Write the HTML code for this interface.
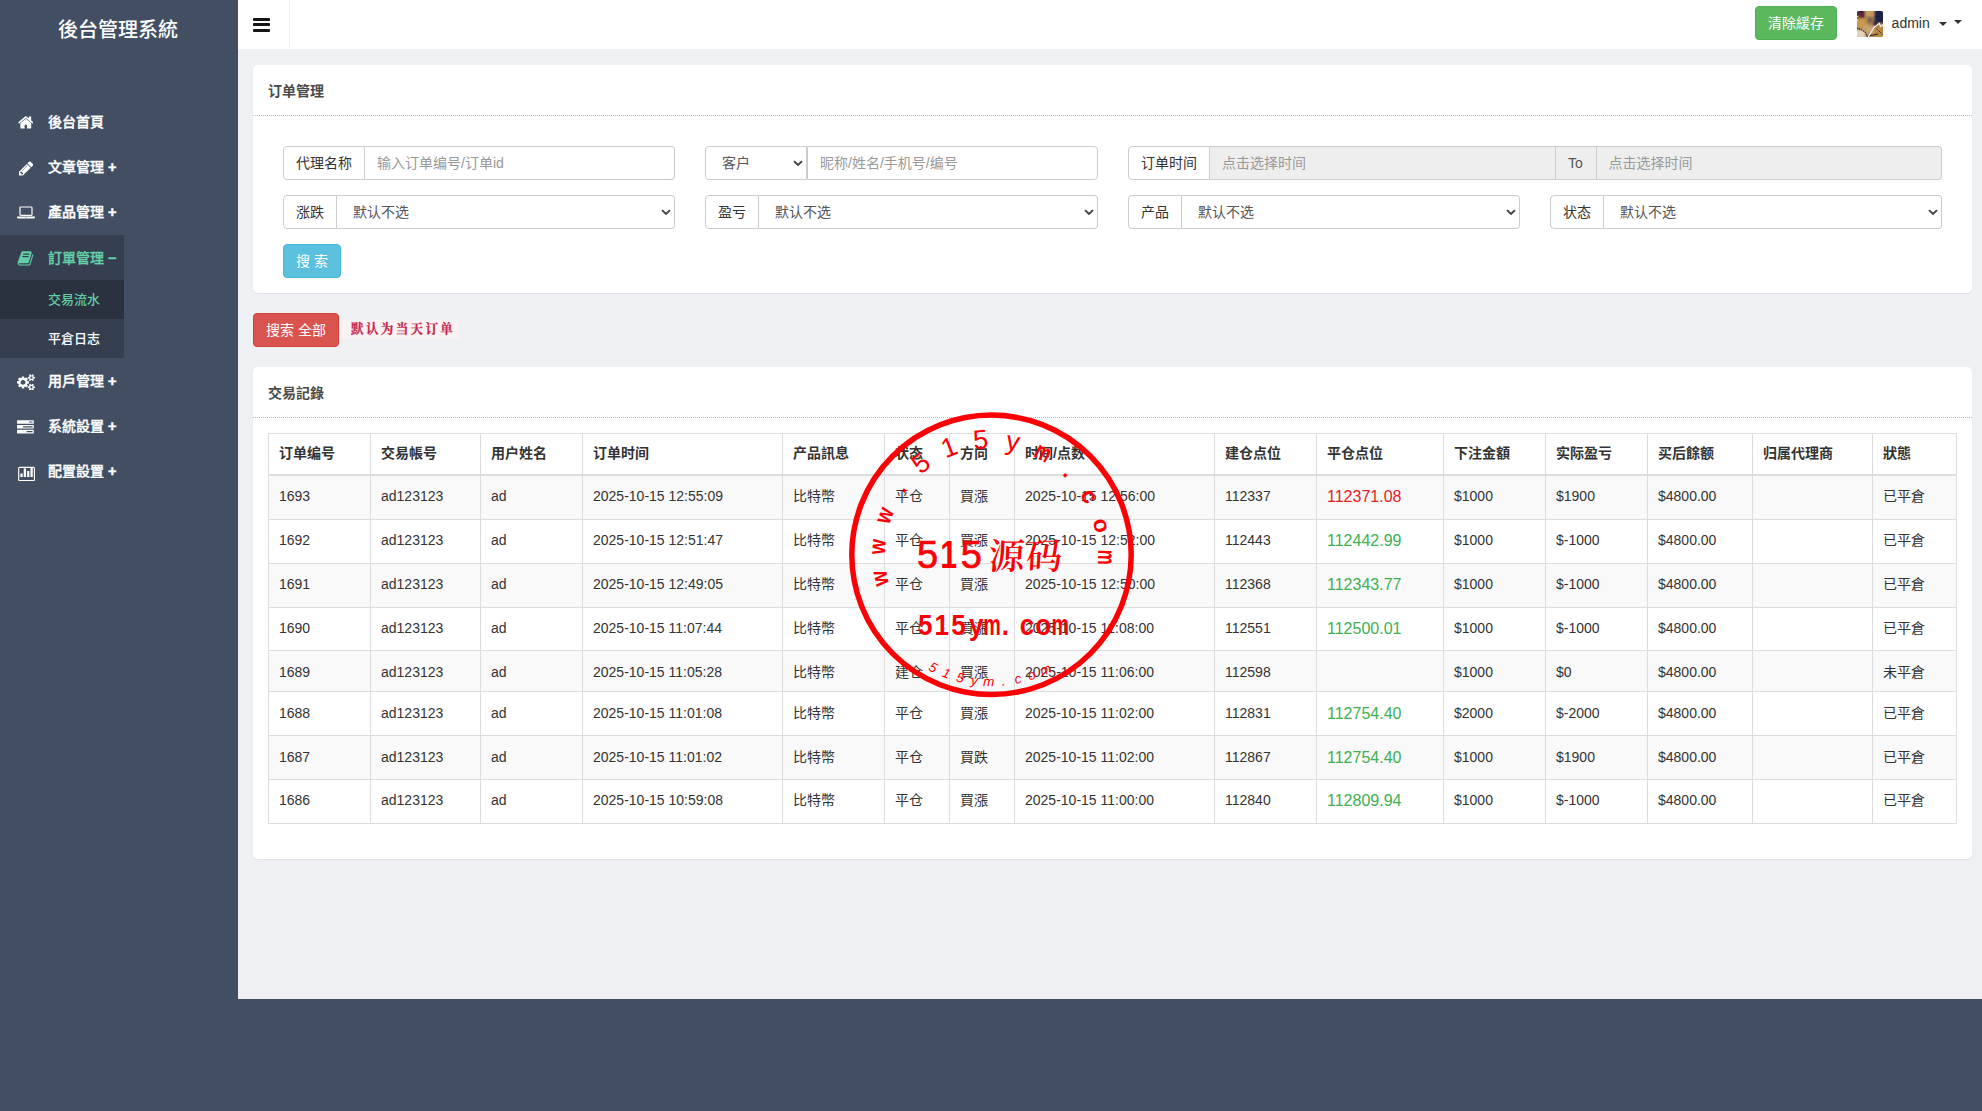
<!DOCTYPE html>
<html lang="zh">
<head>
<meta charset="utf-8">
<title>後台管理系統</title>
<style>
*{box-sizing:border-box;}
html,body{margin:0;padding:0;}
body{width:1982px;height:1111px;overflow:hidden;background:#424f63;font-family:"Liberation Sans","Noto Sans CJK SC",sans-serif;font-size:14px;line-height:1.42857;color:#333;position:relative;}
a{text-decoration:none;color:inherit;}
/* sidebar */
.side{position:absolute;left:0;top:0;width:238px;height:1111px;background:#424f63;}
.logo{position:absolute;left:-1px;top:1.5px;width:238px;height:56px;text-align:center;color:#fff;font-size:20px;line-height:56px;font-weight:500;}
.nav{position:absolute;left:0;top:100px;width:124px;margin:0;padding:0;list-style:none;}
.nav li{display:block;position:relative;}
.nav li a{display:block;height:45px;line-height:45px;padding-left:48px;color:#fff;font-size:14px;font-weight:500;-webkit-text-stroke:.3px currentColor;white-space:nowrap;}
.nav li svg{position:absolute;left:17.6px;fill:#fff;}
.nav li a b{font-weight:700;-webkit-text-stroke:.45px currentColor;font-size:14.5px;}
.nav li.act{background:#353f4f;}
.nav li.act>a{line-height:46.4px;}
.nav li.act>a{color:#65cea7;}
.nav li.act svg{fill:#65cea7;}
.sub{margin:0;padding:0;list-style:none;background:#353f4f;}
.sub li a{height:39px;line-height:39px;font-weight:500;font-size:13px;-webkit-text-stroke:0;}
.sub li.on{background:#2a323f;}
.sub li.on a{color:#65cea7;}
.sub li+li a{line-height:40.5px;}
.nav li.act+li{margin-top:1.2px;}
/* main */
.main{position:absolute;left:238px;top:0;width:1744px;height:998.7px;background:#eff0f4;}
.head{position:absolute;left:0;top:0;width:1744px;height:49px;background:#fff;}
.tog{position:absolute;left:0;top:0;width:52px;height:49px;border-right:1px solid #eff0f4;}
.tog i{position:absolute;left:14.8px;width:17.4px;height:2.9px;background:#161616;border-radius:.8px;}
.btn{display:inline-block;height:34px;line-height:32px;padding:0 12px;font-size:14px;color:#fff;border:1px solid transparent;border-radius:4px;text-align:center;white-space:nowrap;}
.b-g{position:absolute;left:1517px;top:6px;width:82px;background:#5cb85c;border-color:#4cae4c;}
.ava{position:absolute;left:1619px;top:11px;width:26px;height:26px;}
.adm{position:absolute;left:1653.600px;top:13px;font-size:14px;line-height:20px;color:#333;}
.car{position:absolute;width:0;height:0;border-left:4px solid transparent;border-right:4px solid transparent;border-top:4px solid #333;}
.panel{position:absolute;left:15px;width:1719px;background:#fff;border-radius:5px;box-shadow:0 1px 1px rgba(0,0,0,.06);}
.ph{height:51px;line-height:20px;padding:15.8px 15px 0;font-weight:700;color:#4a4a4a;border-bottom:1px dotted #bbb;font-size:14px;}
.ig{position:absolute;height:34px;display:flex;}
.ig>*{height:34px;border:1px solid #ccc;font-size:14px;line-height:20px;padding:5.5px 12px 0;color:#555;background:#fff;white-space:nowrap;}
.ig>*+*{border-left:0;}
.ig>*:first-child{border-radius:4px 0 0 4px;}
.ig>*:last-child{border-radius:0 4px 4px 0;}
.ad{color:#333 !important;text-align:center;flex:none;}
.in{flex:1;color:#999 !important;}
.ro{background:#eee !important;}
.se{flex:1;position:relative;padding-left:16px !important;}
.cv{position:absolute;right:2.3px;top:12px;width:12px;height:8px;border:0 !important;padding:0 !important;background:none !important;}
.b-i{position:absolute;left:30px;top:179px;width:58px;background:#5bc0de;border-color:#46b8da;}
.b-d{position:absolute;left:15px;top:313px;width:86px;background:#d9534f;border-color:#d43f3a;}
code{position:absolute;left:102px;top:320px;height:19px;line-height:20.8px;padding:0 4px 0 11px;font-family:"Liberation Mono","Noto Serif CJK SC",monospace;font-size:12.6px;font-weight:700;letter-spacing:2.3px;-webkit-text-stroke:.25px #c7254e;color:#c7254e;background:#f9f2f4;border-radius:4px;white-space:nowrap;}
table{position:absolute;left:15px;top:66px;width:1688px;border-collapse:collapse;table-layout:fixed;}
th,td{border:1px solid #ddd;padding:10.3px 10px 0;text-align:left;font-size:14px;line-height:20px;vertical-align:top;color:#333;white-space:nowrap;overflow:hidden;}
th{font-weight:700;border-bottom-width:2px;padding-top:9.3px;}
thead tr{height:41px;}
tbody tr{height:43.86px;}
tbody tr:first-child{height:44.86px;}
tbody tr:first-child td{padding-top:10.2px;}
tbody tr.s{height:41px;}
tbody tr:nth-child(odd) td{background:#f9f9f9;}
.g{color:#3eb052;font-size:16px;line-height:21.6px;}
.r{color:#e51c23;font-size:16px;line-height:21.6px;}
.stamp{position:absolute;left:840px;top:404px;width:302px;height:302px;}
</style>
</head>
<body>
<div class="side">
  <div class="logo">後台管理系統</div>
  <ul class="nav">
    <li><svg viewBox="0 0 1664 1792" style="top:13.9px;width:15.60px;height:16.8px"><path d="M1408 992v480q0 26-19 45t-45 19h-384v-384h-256v384h-384q-26 0-45-19t-19-45v-480q0-1 .5-3t.5-3l575-474 575 474q1 2 1 6zm223-69l-62 74q-8 9-21 11h-3q-13 0-21-7l-692-577-692 577q-12 8-24 7-13-2-21-11l-62-74q-8-10-7-23.500t11-21.500l719-599q32-26 76-26t76 26l244 204v-195q0-14 9-23t23-9h192q14 0 23 9t9 23v408l219 182q10 8 11 21.500t-7 23.500z"/></svg><a>後台首頁</a></li>
    <li><svg viewBox="0 0 1536 1792" style="top:14.7px;left:18.6px;width:14.40px;height:16.8px"><path d="M363 1536l91-91-235-235-91 91v107h128v128h107zm523-928q0-22-22-22-10 0-17 7l-542 542q-7 7-7 17 0 22 22 22 10 0 17-7l542-542q7-7 7-17zm-54-192l416 416-832 832h-416v-416zm683 96q0 53-37 90l-166 166-416-416 166-165q36-38 90-38 53 0 91 38l235 234q37 39 37 91z"/></svg><a>文章管理 <b>+</b></a></li>
    <li><svg viewBox="0 0 1920 1792" style="top:14.4px;left:17.2px;width:18.00px;height:16.8px"><path d="M416 1280q-66 0-113-47t-47-113v-704q0-66 47-113t113-47h1088q66 0 113 47t47 113v704q0 66-47 113t-113 47h-1088zm-32-864v704q0 13 9.500 22.500t22.500 9.500h1088q13 0 22.500-9.500t9.500-22.500v-704q0-13-9.500-22.500t-22.500-9.500h-1088q-13 0-22.500 9.500t-9.500 22.500zm1376 928h160v96q0 40-47 68t-113 28h-1600q-66 0-113-28t-47-68v-96h1760zm-720 96q16 0 16-16t-16-16h-160q-16 0-16 16t16 16h160z"/></svg><a>產品管理 <b>+</b></a></li>
    <li class="act"><svg viewBox="0 0 1792 1792" style="top:14.7px;left:17.1px;width:16.80px;height:16.8px"><path d="M1703 478q40 57 18 129l-275 906q-19 64-76.500 107.500t-122.500 43.500h-923q-77 0-148.500-53.500t-99.500-131.500q-24-67-2-127 0-4 3-27t4-37q1-8-3-21.500t-3-19.500q2-11 8-21t16.500-23.500 16.500-23.500q23-38 45-91.500t30-91.500q3-10 .5-30t-.5-28q3-11 17-28t17-23q21-36 42-92t25-90q1-9-2.500-32t.5-28q4-13 22-30.500t22-22.500q19-26 42.500-84.500t27.500-96.500q1-8-3-25.500t-2-26.500q2-8 9-18t18-23 17-21q8-12 16.500-30.500t15-35 16-36 19.500-32 26.500-23.500 36-11.500 47.500 5.500l-1 3q38-9 51-9h761q74 0 114 56t18 130l-274 906q-36 119-71.500 153.500t-128.500 34.500h-869q-27 0-38 15-11 16-1 43 24 70 144 70h923q29 0 56-15.500t35-41.500l300-987q7-22 5-57 38 15 59 43zm-1064 2q-4 13 2 22.500t20 9.500h608q13 0 25.500-9.500t16.500-22.500l21-64q4-13-2-22.500t-20-9.500h-608q-13 0-25.500 9.500t-16.500 22.500zm-83 256q-4 13 2 22.500t20 9.500h608q13 0 25.500-9.500t16.500-22.500l21-64q4-13-2-22.500t-20-9.500h-608q-13 0-25.500 9.500t-16.500 22.500z"/></svg><a>訂單管理 <b>−</b></a>
      <ul class="sub">
        <li class="on"><a>交易流水</a></li>
        <li><a>平倉日志</a></li>
      </ul>
    </li>
    <li><svg viewBox="0 0 1920 1792" style="top:14.5px;left:17.2px;width:18.00px;height:16.8px"><path d="M896 896q0-106-75-181t-181-75-181 75-75 181 75 181 181 75 181-75 75-181zm768 512q0-52-38-90t-90-38-90 38-38 90q0 53 37.500 90.500t90.500 37.500 90.500-37.500 37.500-90.500zm0-1024q0-52-38-90t-90-38-90 38-38 90q0 53 37.500 90.500t90.500 37.500 90.500-37.500 37.500-90.500zm-384 421v185q0 10-7 19.500t-16 10.500l-155 24q-11 35-32 76 34 48 90 115 7 11 7 20 0 12-7 19-23 30-82.500 89.500t-78.500 59.500q-11 0-21-7l-115-90q-37 19-77 31-11 108-23 155-7 24-30 24h-186q-11 0-20-7.500t-10-17.500l-23-153q-34-10-75-31l-118 89q-7 7-20 7-11 0-21-8-144-133-144-160 0-9 7-19 10-14 41-53t47-61q-23-44-35-82l-152-24q-10-1-17-9.500t-7-19.500v-185q0-10 7-19.500t16-10.500l155-24q11-35 32-76-34-48-90-115-7-11-7-20 0-12 7-20 22-30 82-89t79-59q11 0 21 7l115 90q34-18 77-32 11-108 23-154 7-24 30-24h186q11 0 20 7.500t10 17.500l23 153q34 10 75 31l118-89q8-7 20-7 11 0 21 8 144 133 144 160 0 8-7 19-12 16-42 54t-45 60q23 48 34 82l152 23q10 2 17 10.500t7 19.500zm640 533v140q0 16-149 31-12 27-30 52 51 113 51 138 0 4-4 7-122 71-124 71-8 0-46-47t-52-68q-20 2-30 2t-30-2q-14 21-52 68t-46 47q-2 0-124-71-4-3-4-7 0-25 51-138-18-25-30-52-149-15-149-31v-140q0-16 149-31 13-29 30-52-51-113-51-138 0-4 4-7 4-2 35-20t59-34 30-16q8 0 46 46.500t52 67.500q20-2 30-2t30 2q51-71 92-112l6-2q4 0 124 70 4 3 4 7 0 25-51 138 17 23 30 52 149 15 149 31zm0-1024v140q0 16-149 31-12 27-30 52 51 113 51 138 0 4-4 7-122 71-124 71-8 0-46-47t-52-68q-20 2-30 2t-30-2q-14 21-52 68t-46 47q-2 0-124-71-4-3-4-7 0-25 51-138-18-25-30-52-149-15-149-31v-140q0-16 149-31 13-29 30-52-51-113-51-138 0-4 4-7 4-2 35-20t59-34 30-16q8 0 46 46.500t52 67.500q20-2 30-2t30 2q51-71 92-112l6-2q4 0 124 70 4 3 4 7 0 25-51 138 17 23 30 52 149 15 149 31z"/></svg><a>用戶管理 <b>+</b></a></li>
    <li><svg viewBox="0 0 1792 1792" style="top:14.6px;left:17.2px;width:16.80px;height:16.8px"><path d="M1024 1408h640v-128h-640v128zm-384-512h1024v-128h-1024v128zm640-512h384v-128h-384v128zm512 832v256q0 26-19 45t-45 19h-1664q-26 0-45-19t-19-45v-256q0-26 19-45t45-19h1664q26 0 45 19t19 45zm0-512v256q0 26-19 45t-45 19h-1664q-26 0-45-19t-19-45v-256q0-26 19-45t45-19h1664q26 0 45 19t19 45zm0-512v256q0 26-19 45t-45 19h-1664q-26 0-45-19t-19-45v-256q0-26 19-45t45-19h1664q26 0 45 19t19 45z"/></svg><a>系統設置 <b>+</b></a></li>
    <li><svg viewBox="0 0 2048 1792" preserveAspectRatio="none" style="top:15.5px;left:16.8px;width:18px;height:16.8px"><path d="M640 896v384h-256v-384h256zm384-512v896h-256v-896h256zm384 256v640h-256v-640h256zm384-384v1024h-256v-1024h256zm128 1312v-1216q0-13-9.500-22.500t-22.500-9.500h-1600q-13 0-22.500 9.500t-9.500 22.500v1216q0 13 9.500 22.500t22.500 9.500h1600q13 0 22.500-9.500t9.500-22.500zm128-1216v1216q0 66-47 113t-113 47h-1600q-66 0-113-47t-47-113v-1216q0-66 47-113t113-47h1600q66 0 113 47t47 113z"/></svg><a>配置設置 <b>+</b></a></li>
  </ul>
</div>
<div class="main">
  <div class="head">
    <div class="tog"><i style="top:17.9px"></i><i style="top:23.3px"></i><i style="top:29px"></i></div>
    <a class="btn b-g">清除緩存</a>
    <svg class="ava" viewBox="0 0 26 26"><defs><filter id="bl" x="-10%" y="-10%" width="120%" height="120%"><feGaussianBlur stdDeviation="0.9"/></filter><filter id="bs" x="-10%" y="-10%" width="120%" height="120%"><feGaussianBlur stdDeviation="0.35"/></filter><clipPath id="ac"><rect width="26" height="26" rx="2"/></clipPath></defs><g clip-path="url(#ac)"><rect width="26" height="26" fill="#b98a4c"/><g filter="url(#bl)"><rect x="-2" y="-2" width="10" height="9" fill="#3a1f38"/><rect x="-2" y="2" width="8" height="5" fill="#6b2b2e"/><rect x="8" y="-2" width="9" height="8" fill="#c79d62"/><rect x="9" y="5" width="8" height="9" fill="#a98458"/><ellipse cx="13" cy="9" rx="2.500" ry="3" fill="#7d5f4a"/><rect x="17" y="-2" width="11" height="14" fill="#1f2247"/><rect x="16" y="10" width="5" height="5" fill="#3b2c45"/><rect x="-2" y="8" width="11" height="9" fill="#c89850"/><rect x="-2" y="19" width="10" height="9" fill="#e4d2ba"/><rect x="9" y="15" width="8" height="7" fill="#c9a678"/><rect x="17" y="17" width="11" height="11" fill="#b78640"/></g><g filter="url(#bs)" fill="none"><path d="M0 17.200 4 18.500 8 20.800 10.500 26" stroke="#262a4a" stroke-width="1.100" stroke-dasharray="1.500 .7"/><path d="M19.500 17.500 26 24" stroke="#2b2a44" stroke-width="1" stroke-dasharray="1.200 .6"/><path d="M12 24.600 16 24 21 23" stroke="#1f2340" stroke-width="1.100"/><path d="M5.500 18 10.500 13.500" stroke="#e9dcc8" stroke-width=".7" opacity=".7"/><path d="M11 26.500 17 16.200 20 14.300 22.200 12.300 23.600 15.600 26.500 13.300" stroke="#f4f1ee" stroke-width="1.200"/><path d="M0 5.500 1.500 5.200M0 9.500 1 9" stroke="#dfe6f5" stroke-width="1"/></g></g></svg>
    <span class="adm">admin</span>
    <span class="car" style="left:1701px;top:22px"></span>
    <span class="car" style="left:1716px;top:20px"></span>
  </div>

  <div class="panel" style="top:65px;height:228px;">
    <div class="ph">订单管理</div>
    <div class="ig" style="left:30px;top:81px;width:392px;"><span class="ad" style="width:82px">代理名称</span><span class="in">输入订单编号/订单id</span></div>
    <div class="ig" style="left:452px;top:81px;width:393px;"><span class="se" style="flex:none;width:102px;color:#555">客户<svg class="cv" viewBox="0 0 12 8"><path d="M2 2.100 6 5.900 10 2.100" fill="none" stroke="#444" stroke-width="2"/></svg></span><span class="in" style="border-left:1px solid #ccc;margin-left:0">昵称/姓名/手机号/编号</span></div>
    <div class="ig" style="left:875px;top:81px;width:814px;"><span class="ad" style="width:82px">订单时间</span><span class="in ro">点击选择时间</span><span class="ad ro" style="width:41px;color:#555 !important">To</span><span class="in ro">点击选择时间</span></div>
    <div class="ig" style="left:30px;top:130px;width:392px;"><span class="ad" style="width:54px">涨跌</span><span class="se">默认不选<svg class="cv" viewBox="0 0 12 8"><path d="M2 2.100 6 5.900 10 2.100" fill="none" stroke="#444" stroke-width="2"/></svg></span></div>
    <div class="ig" style="left:452px;top:130px;width:393px;"><span class="ad" style="width:54px">盈亏</span><span class="se">默认不选<svg class="cv" viewBox="0 0 12 8"><path d="M2 2.100 6 5.900 10 2.100" fill="none" stroke="#444" stroke-width="2"/></svg></span></div>
    <div class="ig" style="left:875px;top:130px;width:392px;"><span class="ad" style="width:54px">产品</span><span class="se">默认不选<svg class="cv" viewBox="0 0 12 8"><path d="M2 2.100 6 5.900 10 2.100" fill="none" stroke="#444" stroke-width="2"/></svg></span></div>
    <div class="ig" style="left:1297px;top:130px;width:392px;"><span class="ad" style="width:54px">状态</span><span class="se">默认不选<svg class="cv" viewBox="0 0 12 8"><path d="M2 2.100 6 5.900 10 2.100" fill="none" stroke="#444" stroke-width="2"/></svg></span></div>
    <a class="btn b-i">搜 索</a>
  </div>

  <a class="btn b-d">搜索 全部</a>
  <code>默认为当天订单</code>

  <div class="panel" style="top:367px;height:492px;">
    <div class="ph">交易記錄</div>
    <table>
      <colgroup><col style="width:102px"><col style="width:110px"><col style="width:102px"><col style="width:200px"><col style="width:102px"><col style="width:65px"><col style="width:65px"><col style="width:200px"><col style="width:102px"><col style="width:127px"><col style="width:102px"><col style="width:102px"><col style="width:105px"><col style="width:120px"><col style="width:84px"></colgroup>
      <thead><tr><th>订单编号</th><th>交易帳号</th><th>用户姓名</th><th>订单时间</th><th>产品訊息</th><th>状态</th><th>方向</th><th>时间/点数</th><th>建仓点位</th><th>平仓点位</th><th>下注金額</th><th>实际盈亏</th><th>买后餘额</th><th>归属代理商</th><th>狀態</th></tr></thead>
      <tbody>
        <tr><td>1693</td><td>ad123123</td><td>ad</td><td>2025-10-15 12:55:09</td><td>比特幣</td><td>平仓</td><td>買漲</td><td>2025-10-15 12:56:00</td><td>112337</td><td class="r">112371.08</td><td>$1000</td><td>$1900</td><td>$4800.00</td><td></td><td>已平倉</td></tr>
        <tr><td>1692</td><td>ad123123</td><td>ad</td><td>2025-10-15 12:51:47</td><td>比特幣</td><td>平仓</td><td>買漲</td><td>2025-10-15 12:52:00</td><td>112443</td><td class="g">112442.99</td><td>$1000</td><td>$-1000</td><td>$4800.00</td><td></td><td>已平倉</td></tr>
        <tr><td>1691</td><td>ad123123</td><td>ad</td><td>2025-10-15 12:49:05</td><td>比特幣</td><td>平仓</td><td>買漲</td><td>2025-10-15 12:50:00</td><td>112368</td><td class="g">112343.77</td><td>$1000</td><td>$-1000</td><td>$4800.00</td><td></td><td>已平倉</td></tr>
        <tr><td>1690</td><td>ad123123</td><td>ad</td><td>2025-10-15 11:07:44</td><td>比特幣</td><td>平仓</td><td>買漲</td><td>2025-10-15 11:08:00</td><td>112551</td><td class="g">112500.01</td><td>$1000</td><td>$-1000</td><td>$4800.00</td><td></td><td>已平倉</td></tr>
        <tr class="s"><td>1689</td><td>ad123123</td><td>ad</td><td>2025-10-15 11:05:28</td><td>比特幣</td><td>建仓</td><td>買漲</td><td>2025-10-15 11:06:00</td><td>112598</td><td></td><td>$1000</td><td>$0</td><td>$4800.00</td><td></td><td>未平倉</td></tr>
        <tr><td>1688</td><td>ad123123</td><td>ad</td><td>2025-10-15 11:01:08</td><td>比特幣</td><td>平仓</td><td>買漲</td><td>2025-10-15 11:02:00</td><td>112831</td><td class="g">112754.40</td><td>$2000</td><td>$-2000</td><td>$4800.00</td><td></td><td>已平倉</td></tr>
        <tr><td>1687</td><td>ad123123</td><td>ad</td><td>2025-10-15 11:01:02</td><td>比特幣</td><td>平仓</td><td>買跌</td><td>2025-10-15 11:02:00</td><td>112867</td><td class="g">112754.40</td><td>$1000</td><td>$1900</td><td>$4800.00</td><td></td><td>已平倉</td></tr>
        <tr><td>1686</td><td>ad123123</td><td>ad</td><td>2025-10-15 10:59:08</td><td>比特幣</td><td>平仓</td><td>買漲</td><td>2025-10-15 11:00:00</td><td>112840</td><td class="g">112809.94</td><td>$1000</td><td>$-1000</td><td>$4800.00</td><td></td><td>已平倉</td></tr>
      </tbody>
    </table>
  </div>
</div>

<svg class="stamp" viewBox="0 0 302 302">
<circle cx="151.5" cy="150.8" r="139.7" fill="none" stroke="#fc0006" stroke-width="5.5"/>
<g font-family="'Liberation Sans',sans-serif" font-weight="700" font-size="23" fill="#fc0006" text-anchor="middle">
<text transform="rotate(-102.0 151.5 150.8) translate(151.5 44.3) scale(.85 1.04)">w</text>
<text transform="rotate(-85.9 151.5 150.8) translate(151.5 44.3) scale(.85 1.04)">w</text>
<text transform="rotate(-69.8 151.5 150.8) translate(151.5 44.3) scale(.85 1.04)">w</text>
<text transform="rotate(-53.7 151.5 150.8) translate(151.5 44.3)">.</text>
<text transform="rotate(-37.6 151.5 150.8) translate(151.5 44.3)" font-weight="400" font-size="27">5</text>
<text transform="rotate(-21.5 151.5 150.8) translate(151.5 44.3)" font-weight="400" font-size="27">1</text>
<text transform="rotate(-5.4 151.5 150.8) translate(151.5 44.3)" font-weight="400" font-size="27">5</text>
<text transform="rotate(10.7 151.5 150.8) translate(151.5 44.3)" font-weight="400" font-size="27">y</text>
<text transform="rotate(26.8 151.5 150.8) translate(151.5 44.3) scale(.74 1.1)">m</text>
<text transform="rotate(42.9 151.5 150.8) translate(151.5 44.3)">.</text>
<text transform="rotate(59.0 151.5 150.8) translate(151.5 44.3)">c</text>
<text transform="rotate(75.1 151.5 150.8) translate(151.5 44.3)">o</text>
<text transform="rotate(91.2 151.5 150.8) translate(151.5 44.3) scale(.74 1.1)">m</text>
</g>
<g font-family="'Liberation Sans',sans-serif" font-style="italic" font-size="13.5" fill="#fc0006" text-anchor="middle">
<text transform="rotate(27.4 151.5 150.8)" x="151.5" y="282.2">5</text>
<text transform="rotate(20.8 151.5 150.8)" x="151.5" y="282.2">1</text>
<text transform="rotate(14.3 151.5 150.8)" x="151.5" y="282.2">5</text>
<text transform="rotate(7.7 151.5 150.8)" x="151.5" y="282.2">y</text>
<text transform="rotate(1.2 151.5 150.8)" x="151.5" y="282.2">m</text>
<text transform="rotate(-5.4 151.5 150.8)" x="151.5" y="282.2">.</text>
<text transform="rotate(-12.0 151.5 150.8)" x="151.5" y="282.2">c</text>
<text transform="rotate(-18.5 151.5 150.8)" x="151.5" y="282.2">o</text>
<text transform="rotate(-25.1 151.5 150.8)" x="151.5" y="282.2">m</text>
</g>
<g font-family="'Liberation Sans',sans-serif" font-size="38" fill="#fc0006" stroke="#fc0006" stroke-width=".7" text-anchor="middle"><text x="87.5" y="164.2">5</text><text transform="translate(108.800 164.200) scale(.8 1)" font-weight="700" stroke="none">1</text><text x="131.3" y="164.2">5</text></g>
<text transform="translate(0 165) skewX(-3)" x="148 185.500" y="0" font-family="'Noto Serif CJK SC',serif" font-weight="600" font-size="36" fill="#fc0006">源码</text>
<g font-family="'Liberation Sans',sans-serif" font-weight="700" font-size="26" fill="#fc0006" text-anchor="middle">
<text transform="translate(85.2 231.1) scale(1 1.14)">5</text>
<text transform="translate(101.8 231.1) scale(1 1.14)">1</text>
<text transform="translate(118.5 231.1) scale(1 1.14)">5</text>
<text transform="translate(136.3 231.1) scale(1 1.14)">y</text>
<text transform="translate(152.0 231.1) scale(0.76 1.14)">m</text>
<text transform="translate(165.3 231.1) scale(1 1.14)">.</text>
<text transform="translate(187.1 231.1) scale(1 1.14)">c</text>
<text transform="translate(203.1 231.1) scale(1 1.14)">o</text>
<text transform="translate(220.4 231.1) scale(0.76 1.14)">m</text>
</g>
</svg>
</body>
</html>
